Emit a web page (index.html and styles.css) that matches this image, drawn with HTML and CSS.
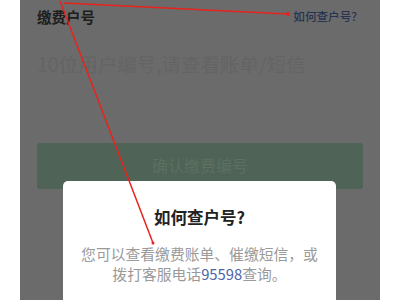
FILE: index.html
```html
<!DOCTYPE html>
<html lang="zh">
<head>
<meta charset="utf-8">
<link rel="stylesheet" href="styles.css">
</head>
<body>
<div class="screen">
  <div class="header">
    <span class="label">缴费户号</span>
    <span class="link">如何查户号?</span>
  </div>
  <div class="placeholder">10位用户编号,请查看账单/短信</div>
  <div class="button">确认缴费编号</div>
  <div class="modal">
    <div class="title">如何查户号?</div>
    <div class="body">您可以查看缴费账单、催缴短信，或<br>拨打客服电话<span class="phone">95598</span>查询。</div>
  </div>
</div>
<svg class="marks" width="400" height="300" viewBox="0 0 400 300">
  <line x1="64" y1="3" x2="288" y2="14" stroke="#e8231d" stroke-width="1.5"/>
  <circle cx="288" cy="14" r="2" fill="#e8231d"/>
  <line x1="60" y1="1" x2="153" y2="243" stroke="#e8231d" stroke-width="1.5"/>
  <circle cx="153" cy="243" r="1.5" fill="#e8231d"/>
</svg>
</body>
</html>
```
FILE: styles.css
```css
html, body {
  margin: 0;
  padding: 0;
  background: #ffffff;
  width: 400px;
  height: 300px;
  overflow: hidden;
  font-family: "Noto Sans CJK SC", "Noto Sans", sans-serif;
}
.screen {
  position: relative;
  margin: 0 20px;
  width: 360px;
  height: 300px;
  background: #6b6b6b;
  padding: 0 17px;
  box-sizing: border-box;
  overflow: hidden;
}
.header {
  display: flex;
  justify-content: space-between;
  align-items: center;
  height: 32px;
}
.label {
  font-size: 14.5px;
  font-weight: bold;
  color: #1e1e1e;
}
.link {
  font-size: 11.6px;
  font-weight: 500;
  color: #283350;
  margin-right: 6px;
}
.placeholder {
  margin-top: 20px;
  font-size: 19.5px;
  line-height: 24px;
  color: #646464;
  white-space: nowrap;
}
.button {
  margin-top: 67px;
  height: 46px;
  border-radius: 3px;
  background: #4f6356;
  color: #5c7063;
  font-size: 16px;
  display: flex;
  align-items: center;
  justify-content: center;
  padding-bottom: 3px;
  box-sizing: border-box;
}
.modal {
  position: absolute;
  left: 43px;
  top: 181px;
  width: 273px;
  height: 140px;
  background: #ffffff;
  border-radius: 5px;
  text-align: center;
}
.title {
  padding-top: 25px;
  font-size: 16.5px;
  line-height: 22px;
  font-weight: bold;
  color: #222222;
}
.body {
  margin-top: 16px;
  font-size: 14.8px;
  line-height: 20px;
  color: #9a9a9a;
}
.phone {
  color: #4b63a8;
}
.marks {
  position: absolute;
  left: 0;
  top: 0;
  pointer-events: none;
}
```
